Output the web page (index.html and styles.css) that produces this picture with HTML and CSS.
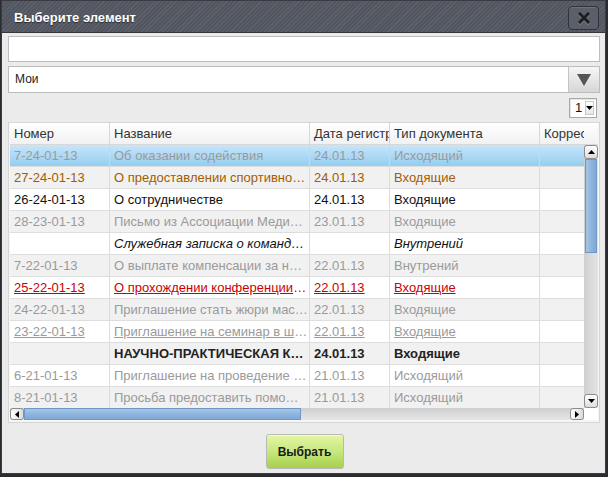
FILE: index.html
```html
<!DOCTYPE html>
<html lang="ru">
<head>
<meta charset="utf-8">
<title>Выберите элемент</title>
<link rel="stylesheet" href="styles.css">
</head>
<body>
<div class="dialog">
  <div class="titlebar">
    <span class="title">Выберите элемент</span>
    <button class="close" type="button" aria-label="Закрыть">
      <svg width="12" height="12" viewBox="0 0 12 12"><path d="M2 2 L10 10 M10 2 L2 10" stroke="#1e1f22" stroke-width="3" stroke-linecap="square"/></svg>
    </button>
  </div>
  <div class="content">
    <input class="search" type="text">
    <div class="combo">
      <span class="combo-value">Мои</span>
      <span class="combo-btn"><svg width="14" height="12" viewBox="0 0 14 12"><path d="M0 0 H14 L7 12 Z" fill="#555"/></svg></span>
    </div>
    <div class="pager">
      <div class="pagesel"><span class="pagenum">1</span><span class="pagearrow"><svg width="7" height="4" viewBox="0 0 7 4"><path d="M0 0 H7 L3.5 4 Z" fill="#000"/></svg></span></div>
    </div>
    <div class="grid">
      <div class="head">
        <div class="c c1">Номер</div>
        <div class="c c2">Название</div>
        <div class="c c3">Дата регистрации</div>
        <div class="c c4">Тип документа</div>
        <div class="c c5">Корреспондент</div>
      </div>
      <div class="middle">
        <div class="rows">
          <div class="row sel muted"><div class="c c1">7-24-01-13</div><div class="c c2">Об оказании содействия</div><div class="c c3">24.01.13</div><div class="c c4">Исходящий</div><div class="c c5"></div></div>
          <div class="row alt orange"><div class="c c1">27-24-01-13</div><div class="c c2">О предоставлении спортивного зала</div><div class="c c3">24.01.13</div><div class="c c4">Входящие</div><div class="c c5"></div></div>
          <div class="row"><div class="c c1">26-24-01-13</div><div class="c c2">О сотрудничестве</div><div class="c c3">24.01.13</div><div class="c c4">Входящие</div><div class="c c5"></div></div>
          <div class="row alt muted"><div class="c c1">28-23-01-13</div><div class="c c2">Письмо из Ассоциации Медицинских работников</div><div class="c c3">23.01.13</div><div class="c c4">Входящие</div><div class="c c5"></div></div>
          <div class="row italic"><div class="c c1"></div><div class="c c2">Служебная записка о командировке</div><div class="c c3"></div><div class="c c4">Внутрений</div><div class="c c5"></div></div>
          <div class="row alt muted"><div class="c c1">7-22-01-13</div><div class="c c2">О выплате компенсации за неиспользованный отпуск</div><div class="c c3">22.01.13</div><div class="c c4">Внутрений</div><div class="c c5"></div></div>
          <div class="row red ul"><div class="c c1"><span>25-22-01-13</span></div><div class="c c2"><span>О прохождении конференции в г. Москве</span></div><div class="c c3"><span>22.01.13</span></div><div class="c c4"><span>Входящие</span></div><div class="c c5"></div></div>
          <div class="row alt muted"><div class="c c1">24-22-01-13</div><div class="c c2">Приглашение стать жюри мастер-класса</div><div class="c c3">22.01.13</div><div class="c c4">Входящие</div><div class="c c5"></div></div>
          <div class="row muted ul"><div class="c c1"><span>23-22-01-13</span></div><div class="c c2"><span>Приглашение на семинар в школу</span></div><div class="c c3"><span>22.01.13</span></div><div class="c c4"><span>Входящие</span></div><div class="c c5"></div></div>
          <div class="row alt bold"><div class="c c1"></div><div class="c c2">НАУЧНО-ПРАКТИЧЕСКАЯ КОНФЕРЕНЦИЯ</div><div class="c c3">24.01.13</div><div class="c c4">Входящие</div><div class="c c5"></div></div>
          <div class="row muted"><div class="c c1">6-21-01-13</div><div class="c c2">Приглашение на проведение мероприятия</div><div class="c c3">21.01.13</div><div class="c c4">Исходящий</div><div class="c c5"></div></div>
          <div class="row alt muted"><div class="c c1">8-21-01-13</div><div class="c c2">Просьба предоставить помощь в организации</div><div class="c c3">21.01.13</div><div class="c c4">Исходящий</div><div class="c c5"></div></div>
        </div>
        <div class="vscroll">
          <div class="sbtn"><svg width="7" height="4" viewBox="0 0 7 4"><path d="M0 4 H7 L3.5 0 Z" fill="#000"/></svg></div>
          <div class="vthumb"></div>
          <div class="vtrack"></div>
          <div class="sbtn"><svg width="7" height="4" viewBox="0 0 7 4"><path d="M0 0 H7 L3.5 4 Z" fill="#000"/></svg></div>
        </div>
      </div>
      <div class="bottom">
        <div class="hscroll">
          <div class="hbtn"><svg width="4" height="7" viewBox="0 0 4 7"><path d="M4 0 V7 L0 3.5 Z" fill="#000"/></svg></div>
          <div class="hthumb"></div>
          <div class="htrack"></div>
          <div class="hbtn"><svg width="4" height="7" viewBox="0 0 4 7"><path d="M0 0 V7 L4 3.5 Z" fill="#000"/></svg></div>
        </div>
        <div class="corner"></div>
      </div>
    </div>
    <div class="actions">
      <button class="choose" type="button">Выбрать</button>
    </div>
  </div>
</div>
</body>
</html>
```
FILE: styles.css
```css
* { box-sizing: border-box; }
html, body { margin: 0; padding: 0; }
body {
  width: 608px;
  height: 477px;
  background: #2b2c30;
  font-family: "Liberation Sans", Arial, sans-serif;
  overflow: hidden;
}
.dialog {
  width: 605px;
  height: 474px;
  margin-left: 1px;
  border: 1px solid #3a3c42;
  background: #ebebeb;
  display: flex;
  flex-direction: column;
}
.titlebar {
  height: 32px;
  flex: none;
  display: flex;
  align-items: center;
  justify-content: space-between;
  padding: 0 6px 0 12px;
  background: repeating-linear-gradient(135deg, #5d616b 0 1px, #52565f 1px 3px);
  border-bottom: 1px solid #34363b;
}
.title {
  color: #fff;
  font-weight: bold;
  font-size: 13px;
  text-shadow: 0 1px 1px rgba(0,0,0,0.5);
  margin-top: 2px;
}
.close {
  width: 31px;
  height: 24px;
  margin-top: 2px;
  padding: 0;
  border: 1px solid #30323a;
  border-radius: 4px;
  background: #5b5f69;
  box-shadow: inset 0 1px 0 rgba(255,255,255,0.12);
  display: flex;
  align-items: center;
  justify-content: center;
}
.close svg { filter: drop-shadow(0 1px 0 rgba(255,255,255,0.25)); }
.content {
  flex: 1;
  display: flex;
  flex-direction: column;
  padding: 3px 4px 0 6px;
}
.search {
  display: block;
  width: 592px;
  height: 26px;
  margin: 0;
  border: 1px solid #bdbdbd;
  background: #fff;
  outline: none;
}
.combo {
  margin-top: 4px;
  width: 592px;
  height: 27px;
  display: flex;
  border: 1px solid #bdbdbd;
  background: #fff;
}
.combo-value {
  flex: 1;
  font-size: 12px;
  color: #222;
  padding-left: 6px;
  line-height: 25px;
}
.combo-btn {
  width: 31px;
  border-left: 1px solid #c4c4c4;
  background: linear-gradient(#f6f6f6, #d6d6d6);
  display: flex;
  align-items: center;
  justify-content: center;
}
.pager {
  display: flex;
  justify-content: flex-end;
  margin-top: 5px;
  width: 592px;
  padding-right: 3px;
}
.pagesel {
  width: 28px;
  height: 20px;
  display: flex;
  border: 1px solid #a9a9a9;
  background: #fff;
  box-shadow: inset 1px 1px 0 #e6e6e6;
}
.pagenum {
  flex: 1;
  font-size: 13px;
  line-height: 18px;
  padding-left: 5px;
  color: #111;
}
.pagearrow {
  width: 9px;
  margin: 2px 2px 2px 0;
  background: linear-gradient(#fff, #e8e8e8);
  border: 1px solid #c8c8c8;
  display: flex;
  align-items: center;
  justify-content: center;
}
.grid {
  margin-top: 4px;
  width: 592px;
  border: 1px solid #d6d6d6;
  background: #f6f6f6;
  padding: 0 1px 2px 1px;
  font-size: 13px;
}
.head {
  height: 22px;
  display: flex;
  background: linear-gradient(#ffffff, #f1f1f1);
  border-bottom: 1px solid #d8d8d8;
  color: #333;
  overflow: hidden;
}
.head .c { line-height: 22px; text-overflow: clip; border-right: 1px solid #d8d8d8; padding-right: 0; }
.head .c5 { border-right: none; width: 44px; }
.c {
  flex: none;
  padding: 0 1px 0 4px;
  white-space: nowrap;
  overflow: hidden;
  text-overflow: ellipsis;
  border-right: 1px solid #dcdcdc;
}
.c1 { width: 100px; }
.c2 { width: 200px; }
.c3 { width: 80px; }
.c4 { width: 150px; }
.c5 { width: 44px; border-right: none; }
.middle {
  display: flex;
  height: 263px;
}
.rows {
  width: 574px;
  overflow: hidden;
  background: #fff;
}
.row {
  height: 22px;
  display: flex;
  border-bottom: 1px solid #dedede;
  color: #111;
  background: #fff;
}
.row .c { line-height: 21px; }
.row.alt { background: #f1f1f1; }
.row.sel { background: linear-gradient(#c8e5fa, #94cdf0); }
.row.sel .c { border-right-color: #bcdcf2; }
.muted { color: #9a9a9a; }
.orange { color: #a35c00; }
.red { color: #cc0000; }
.italic { font-style: italic; }
.bold { font-weight: bold; color: #222; }
.ul .c span { text-decoration: underline; }
.vscroll {
  width: 14px;
  display: flex;
  flex-direction: column;
  background: linear-gradient(90deg, #cfcfcf, #e4e4e4);
}
.sbtn {
  height: 14px;
  flex: none;
  border: 1px solid #8c8c8c;
  border-radius: 3px;
  background: linear-gradient(#ffffff, #dcdcdc);
  display: flex;
  align-items: center;
  justify-content: center;
}
.vthumb {
  height: 94px;
  flex: none;
  margin: 0 1px;
  border: 1px solid #6f98c6;
  background: linear-gradient(90deg, #a7c6e6, #8ab2dc 60%, #7ea8d6);
}
.vtrack { flex: 1; }
.bottom {
  display: flex;
  height: 12px;
}
.hscroll {
  width: 574px;
  display: flex;
  background: linear-gradient(#cfcfcf, #e6e6e6);
}
.hbtn {
  width: 14px;
  flex: none;
  border: 1px solid #8c8c8c;
  border-radius: 3px;
  background: linear-gradient(90deg, #ffffff, #dcdcdc);
  display: flex;
  align-items: center;
  justify-content: center;
}
.hthumb {
  width: 277px;
  flex: none;
  border: 1px solid #6f98c6;
  background: linear-gradient(#a7c6e6, #8ab2dc 60%, #7ea8d6);
}
.htrack { flex: 1; }
.corner { width: 14px; background: #fff; }
.actions {
  display: flex;
  justify-content: center;
  padding-top: 11px;
}
.choose {
  width: 78px;
  height: 35px;
  border: 1px solid #b9b9b9;
  border-radius: 3px;
  background: linear-gradient(#e4f6a4, #c4e67a 55%, #a6d04a);
  box-shadow: inset 0 1px 0 rgba(255,255,255,0.6);
  font-family: "Liberation Sans", Arial, sans-serif;
  font-weight: bold;
  font-size: 12px;
  color: #1a1a1a;
  padding: 0;
}
```
